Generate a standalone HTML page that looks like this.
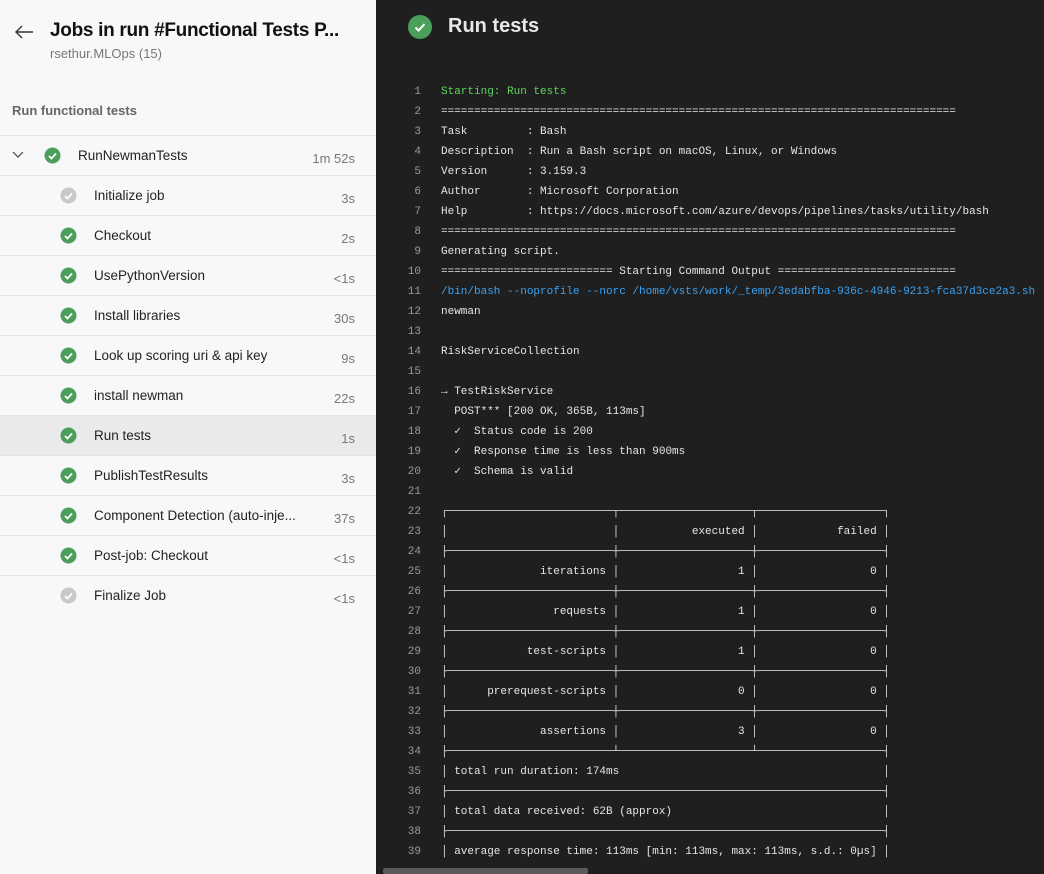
<!DOCTYPE html>
<html><head><meta charset="utf-8"><style>
*{margin:0;padding:0;box-sizing:border-box}
body{width:1044px;height:874px;overflow:hidden;font-family:"Liberation Sans",sans-serif;position:relative;background:#1e1e1e}
#left{position:absolute;left:0;top:0;width:376px;height:874px;background:#f8f8f8}
#right{position:absolute;left:376px;top:0;width:668px;height:874px;background:#1f1f1f;overflow:hidden}
.title{position:absolute;left:50px;top:20px;font-size:19px;color:#111;font-weight:600;white-space:nowrap;letter-spacing:-0.3px}
.sub{position:absolute;left:50px;top:46px;font-size:13px;color:#777}
.arrow{position:absolute;left:14px;top:24px}
.sect{position:absolute;left:12px;top:103px;font-size:13px;color:#666;font-weight:600}
.row{position:absolute;left:0;width:376px;height:40px;border-top:1px solid #e4e4e4;font-size:13.5px;color:#222}
.row .n{position:absolute;left:94px;top:12px}
.row .t{position:absolute;right:21px;top:15px;color:#777;font-size:13px}
.row svg.ic{position:absolute;left:60px;top:11px}
.sel{background:#eaeaea}
.ln{position:absolute;left:376px;width:45px;text-align:right;color:#9a9a9a;font:11px/20px "Liberation Mono","DejaVu Sans Mono",monospace}
pre{position:absolute;left:441px;top:82px;font:11px/20px "Liberation Mono","DejaVu Sans Mono",monospace;color:#e6e6e6;white-space:pre}
.g{color:#5fd35f}.b{color:#3aa0f0}
</style></head><body>
<div id="left">
<svg class="arrow" width="20" height="16" viewBox="0 0 20 16"><path d="M19 8H2M8 2L2 8l6 6" stroke="#333" stroke-width="1.4" fill="none"/></svg>
<div class="title">Jobs in run #Functional Tests P...</div>
<div class="sub">rsethur.MLOps (15)</div>
<div class="sect">Run functional tests</div>
</div>
<div id="right">
<svg style="position:absolute;left:32px;top:15px" width="24" height="24"><circle cx="12" cy="12" r="12" fill="#4a9f5a"/><path d="M7.5 12.5l3 3 6-6.5" stroke="#fff" stroke-width="2" fill="none"/></svg>
<div style="position:absolute;left:72px;top:15px;font-size:20px;font-weight:600;color:#e8e8e8">Run tests</div>
<div style="position:absolute;left:7px;top:868px;width:205px;height:6px;background:#5a5a5a;border-radius:2px"></div>
</div>
<div class="ln" style="top:82px">1<br>2<br>3<br>4<br>5<br>6<br>7<br>8<br>9<br>10<br>11<br>12<br>13<br>14<br>15<br>16<br>17<br>18<br>19<br>20<br>21<br>22<br>23<br>24<br>25<br>26<br>27<br>28<br>29<br>30<br>31<br>32<br>33<br>34<br>35<br>36<br>37<br>38<br>39</div>
<pre><span class="g">Starting: Run tests</span>
==============================================================================
Task         : Bash
Description  : Run a Bash script on macOS, Linux, or Windows
Version      : 3.159.3
Author       : Microsoft Corporation
Help         : https://docs.microsoft.com/azure/devops/pipelines/tasks/utility/bash
==============================================================================
Generating script.
========================== Starting Command Output ===========================
<span class="b">/bin/bash --noprofile --norc /home/vsts/work/_temp/3edabfba-936c-4946-9213-fca37d3ce2a3.sh</span>
newman

RiskServiceCollection

→ TestRiskService
  POST*** [200 OK, 365B, 113ms]
  ✓  Status code is 200
  ✓  Response time is less than 900ms
  ✓  Schema is valid

┌─────────────────────────┬────────────────────┬───────────────────┐
│                         │           executed │            failed │
├─────────────────────────┼────────────────────┼───────────────────┤
│              iterations │                  1 │                 0 │
├─────────────────────────┼────────────────────┼───────────────────┤
│                requests │                  1 │                 0 │
├─────────────────────────┼────────────────────┼───────────────────┤
│            test-scripts │                  1 │                 0 │
├─────────────────────────┼────────────────────┼───────────────────┤
│      prerequest-scripts │                  0 │                 0 │
├─────────────────────────┼────────────────────┼───────────────────┤
│              assertions │                  3 │                 0 │
├─────────────────────────┴────────────────────┴───────────────────┤
│ total run duration: 174ms                                        │
├──────────────────────────────────────────────────────────────────┤
│ total data received: 62B (approx)                                │
├──────────────────────────────────────────────────────────────────┤
│ average response time: 113ms [min: 113ms, max: 113ms, s.d.: 0µs] │</pre>
<div class="row" style="top:135px"><svg style="position:absolute;left:12px;top:15px" width="12" height="8"><path d="M1 1l5 5 5-5" stroke="#444" stroke-width="1.2" fill="none"/></svg><svg class="ic" style="left:44px" width="17" height="17"><circle cx="8.5" cy="8.5" r="8" fill="#4a9f5a"/><path d="M5 9l2.5 2.5 4.5-5" stroke="#fff" stroke-width="1.8" fill="none"/></svg><span class="n" style="left:78px">RunNewmanTests</span><span class="t">1m 52s</span></div>
<div class="row" style="top:175px"><svg class="ic" width="17" height="17"><circle cx="8.5" cy="8.5" r="8" fill="#c8c8c8"/><path d="M5 9l2.5 2.5 4.5-5" stroke="#fff" stroke-width="1.8" fill="none"/></svg><span class="n">Initialize job</span><span class="t">3s</span></div>
<div class="row" style="top:215px"><svg class="ic" width="17" height="17"><circle cx="8.5" cy="8.5" r="8" fill="#4a9f5a"/><path d="M5 9l2.5 2.5 4.5-5" stroke="#fff" stroke-width="1.8" fill="none"/></svg><span class="n">Checkout</span><span class="t">2s</span></div>
<div class="row" style="top:255px"><svg class="ic" width="17" height="17"><circle cx="8.5" cy="8.5" r="8" fill="#4a9f5a"/><path d="M5 9l2.5 2.5 4.5-5" stroke="#fff" stroke-width="1.8" fill="none"/></svg><span class="n">UsePythonVersion</span><span class="t">&lt;1s</span></div>
<div class="row" style="top:295px"><svg class="ic" width="17" height="17"><circle cx="8.5" cy="8.5" r="8" fill="#4a9f5a"/><path d="M5 9l2.5 2.5 4.5-5" stroke="#fff" stroke-width="1.8" fill="none"/></svg><span class="n">Install libraries</span><span class="t">30s</span></div>
<div class="row" style="top:335px"><svg class="ic" width="17" height="17"><circle cx="8.5" cy="8.5" r="8" fill="#4a9f5a"/><path d="M5 9l2.5 2.5 4.5-5" stroke="#fff" stroke-width="1.8" fill="none"/></svg><span class="n">Look up scoring uri &amp; api key</span><span class="t">9s</span></div>
<div class="row" style="top:375px"><svg class="ic" width="17" height="17"><circle cx="8.5" cy="8.5" r="8" fill="#4a9f5a"/><path d="M5 9l2.5 2.5 4.5-5" stroke="#fff" stroke-width="1.8" fill="none"/></svg><span class="n">install newman</span><span class="t">22s</span></div>
<div class="row sel" style="top:415px"><svg class="ic" width="17" height="17"><circle cx="8.5" cy="8.5" r="8" fill="#4a9f5a"/><path d="M5 9l2.5 2.5 4.5-5" stroke="#fff" stroke-width="1.8" fill="none"/></svg><span class="n">Run tests</span><span class="t">1s</span></div>
<div class="row" style="top:455px"><svg class="ic" width="17" height="17"><circle cx="8.5" cy="8.5" r="8" fill="#4a9f5a"/><path d="M5 9l2.5 2.5 4.5-5" stroke="#fff" stroke-width="1.8" fill="none"/></svg><span class="n">PublishTestResults</span><span class="t">3s</span></div>
<div class="row" style="top:495px"><svg class="ic" width="17" height="17"><circle cx="8.5" cy="8.5" r="8" fill="#4a9f5a"/><path d="M5 9l2.5 2.5 4.5-5" stroke="#fff" stroke-width="1.8" fill="none"/></svg><span class="n">Component Detection (auto-inje...</span><span class="t">37s</span></div>
<div class="row" style="top:535px"><svg class="ic" width="17" height="17"><circle cx="8.5" cy="8.5" r="8" fill="#4a9f5a"/><path d="M5 9l2.5 2.5 4.5-5" stroke="#fff" stroke-width="1.8" fill="none"/></svg><span class="n">Post-job: Checkout</span><span class="t">&lt;1s</span></div>
<div class="row" style="top:575px"><svg class="ic" width="17" height="17"><circle cx="8.5" cy="8.5" r="8" fill="#c8c8c8"/><path d="M5 9l2.5 2.5 4.5-5" stroke="#fff" stroke-width="1.8" fill="none"/></svg><span class="n">Finalize Job</span><span class="t">&lt;1s</span></div>
</body></html>
